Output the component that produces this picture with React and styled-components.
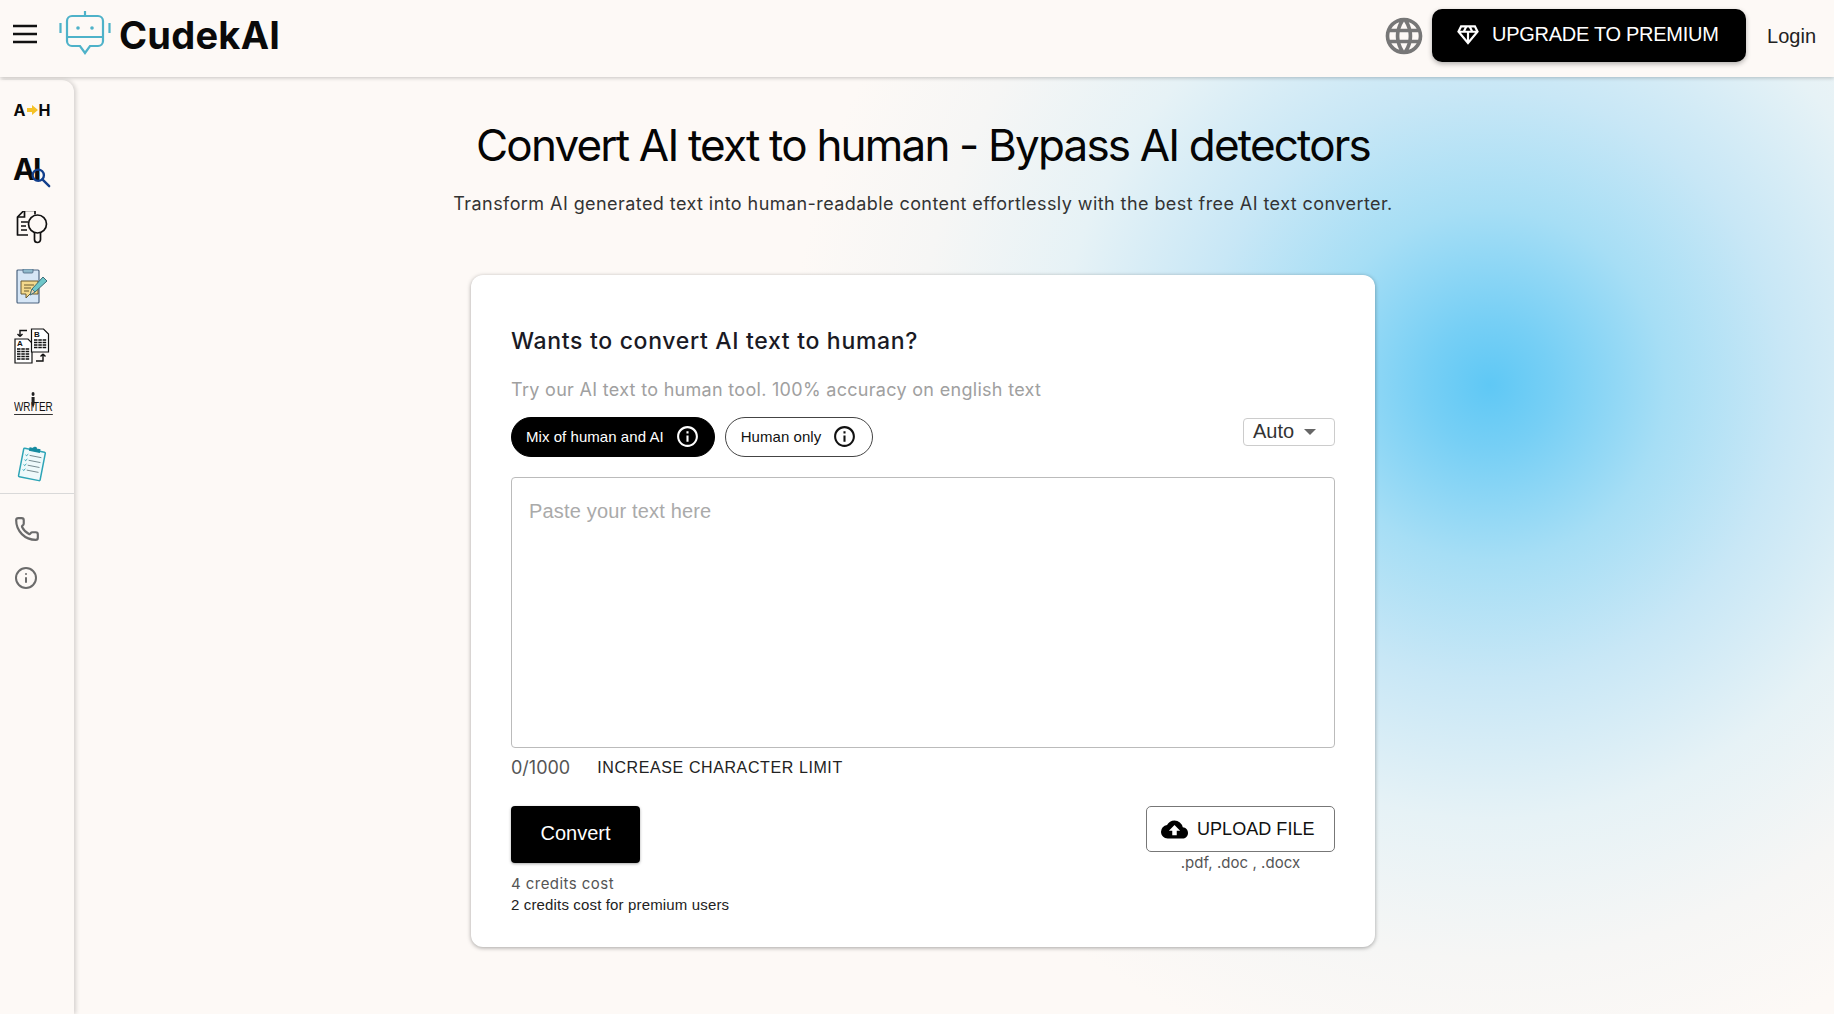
import React from "react";
import styled, { createGlobalStyle } from "styled-components";
import { MdLanguage, MdCloudUpload, MdOutlineDiamond, MdInfoOutline } from "react-icons/md";
import { Phone, Info } from "lucide-react";

const Global = createGlobalStyle`
  * { box-sizing: border-box; }
  html, body { margin: 0; padding: 0; height: 100%; background: #fdf9f6; }
  body { font-family: "Liberation Sans", Arial, sans-serif; color: #000; }
`;

const Page = styled.div`
  width: 1834px;
  height: 1014px;
  overflow: hidden;
  display: flex;
  flex-direction: column;
  background: #fdf9f6;
`;

const Header = styled.header`
  height: 77px;
  flex: none;
  display: flex;
  align-items: center;
  padding: 0 18px 0 12px;
  background: #fdf9f6;
  box-shadow: 0 1px 4px rgba(0, 0, 0, 0.22);
  position: relative;
  z-index: 2;
`;

const Burger = styled.svg`
  width: 26px;
  height: 20px;
  margin-top: -10px;
  flex: none;
`;

const LogoMark = styled.svg`
  width: 52px;
  height: 46px;
  margin-left: 21px;
  margin-top: -11px;
  flex: none;
`;

const Brand = styled.div`
  font-family: Inter, sans-serif;
  font-weight: 700;
  font-size: 38px;
  letter-spacing: 0.25px;
  margin-left: 8px;
  margin-top: -7px;
  color: #0a0a0a;
`;

const Spacer = styled.div`
  flex: 1;
`;

const Globe = styled(MdLanguage)`
  width: 44px;
  height: 44px;
  margin-top: -5px;
  color: #777;
  flex: none;
  margin-right: 6px;
`;

const PremiumButton = styled.button`
  width: 314px;
  height: 53px;
  margin-top: -6px;
  display: flex;
  align-items: center;
  gap: 11px;
  padding: 0 0 2px 23px;
  border: 0;
  border-radius: 10px;
  background: #000;
  color: #fff;
  font: 400 20px "Liberation Sans", sans-serif;
  letter-spacing: -0.28px;
  box-shadow: 0 2px 5px rgba(0, 0, 0, 0.3);
  svg { width: 26px; height: 26px; }
`;

const Login = styled.div`
  margin-left: 21px;
  margin-top: -4px;
  font-size: 20px;
  color: #222;
`;

const Body = styled.div`
  flex: 1;
  display: flex;
  min-height: 0;
  background: radial-gradient(
    circle 700px at 1490px 308px,
    #5fc8f5 0%,
    #76cff5 9%,
    #a6def5 25%,
    #c8e7f6 42%,
    #e6f2f6 62%,
    #f6f6f5 82%,
    #fdf9f6 100%
  );
`;

const Sidebar = styled.nav`
  width: 74px;
  flex: none;
  margin-top: 3px;
  background: #fdf9f6;
  border-top-right-radius: 12px;
  box-shadow: 2px 0 4px rgba(0, 0, 0, 0.16);
  display: flex;
  flex-direction: column;
`;

const NavItem = styled.div`
  height: 59px;
  flex: none;
  display: flex;
  align-items: center;
  justify-content: center;
  padding-right: 10px;
  position: relative;
`;

const NavDivider = styled.div`
  height: 1px;
  background: #d9d9d9;
  margin-bottom: 10px;
`;

const NavLink = styled.div`
  height: 49px;
  flex: none;
  display: flex;
  align-items: center;
  padding-left: 14px;
  color: #6b6b6b;
`;

const ConvertMark = styled.div`
  display: flex;
  align-items: center;
  gap: 1px;
  font: 700 16px Inter, sans-serif;
  color: #0a0a0a;
  svg { width: 11px; height: 10px; }
`;

const DetectMark = styled.div`
  position: relative;
  width: 36px;
  height: 34px;
  margin-left: -2px;
  font: 700 30px/34px Inter, sans-serif;
  letter-spacing: -2.5px;
  color: #0a0a0a;
  svg {
    position: absolute;
    right: -2px;
    bottom: -2px;
    width: 20px;
    height: 20px;
  }
`;

const WriterMark = styled.div`
  position: relative;
  left: 1px;
  font: 400 13px/14px "Liberation Sans", sans-serif;
  transform: scaleX(0.76);
  color: #111;
  border-bottom: 1.5px solid #333;
  padding-top: 5px;
  letter-spacing: -0.1px;
  svg {
    position: absolute;
    left: 50%;
    top: -3px;
    margin-left: -3px;
    width: 6px;
    height: 16px;
  }
`;

const Content = styled.main`
  flex: 1;
  min-width: 0;
  display: flex;
  flex-direction: column;
  align-items: center;
  padding: 42px 62px 0 0;
`;

const Title = styled.h1`
  margin: 0;
  font: 400 44px/52px Inter, sans-serif;
  letter-spacing: -1.82px;
  color: #050505;
  white-space: nowrap;
`;

const Subtitle = styled.p`
  margin: 21px 0 0;
  font: 400 18px/24px Inter, sans-serif;
  letter-spacing: 0.43px;
  color: #333;
  white-space: nowrap;
`;

const Card = styled.section`
  width: 904px;
  height: 672px;
  margin-top: 59px;
  flex: none;
  padding: 40px;
  background: #fff;
  border-radius: 12px;
  box-shadow: 0 1px 4px rgba(0, 0, 0, 0.35);
  display: flex;
  flex-direction: column;
`;

const CardTitle = styled.h2`
  margin: 12px 0 0;
  font: 500 23px/28px Inter, sans-serif;
  letter-spacing: 0.68px;
  color: #1a1a24;
`;

const CardHint = styled.p`
  margin: 23px 0 0;
  font: 400 18px/24px Inter, sans-serif;
  letter-spacing: 0.3px;
  color: #a0a0a0;
`;

const ModeRow = styled.div`
  margin-top: 15px;
  display: flex;
  align-items: flex-start;
  gap: 10px;
  flex: none;
`;

const Pill = styled.button`
  height: 40px;
  padding: ${(p) => (p.$active ? "0 14px 2px 14px" : "0 15px 2px 15px")};
  display: flex;
  align-items: center;
  gap: 11px;
  border-radius: 20px;
  border: 1px solid ${(p) => (p.$active ? "#000" : "#444")};
  background: ${(p) => (p.$active ? "#000" : "#fff")};
  color: ${(p) => (p.$active ? "#fff" : "#111")};
  font: 400 15px "Liberation Sans", sans-serif;
  letter-spacing: 0.05px;
  svg { width: 25px; height: 25px; }
`;

const LangSelect = styled.div`
  margin-left: auto;
  margin-top: 1px;
  width: 92px;
  height: 28px;
  padding: 0 0 2px 9px;
  display: flex;
  align-items: center;
  gap: 10px;
  border: 1px solid #ccc;
  border-radius: 4px;
  font-size: 20px;
  color: #333;
`;

const Caret = styled.span`
  width: 0;
  height: 0;
  margin-top: 2px;
  border-left: 6.5px solid transparent;
  border-right: 6.5px solid transparent;
  border-top: 6.5px solid #666;
`;

const TextArea = styled.textarea`
  display: block;
  flex: none;
  width: 100%;
  height: 271px;
  margin-top: 20px;
  padding: 21px 17px;
  border: 1px solid #bbb;
  border-radius: 4px;
  resize: none;
  outline: none;
  font: 400 20px/24px "Liberation Sans", sans-serif;
  letter-spacing: 0.17px;
  &::placeholder { color: #aaa; opacity: 1; }
`;

const CounterRow = styled.div`
  margin-top: 9px;
  display: flex;
  align-items: center;
  gap: 27px;
  height: 21px;
  flex: none;
`;

const Counter = styled.span`
  font: 400 18px Inter, sans-serif;
  letter-spacing: 0px;
  color: #555;
`;

const LimitLink = styled.span`
  font-size: 16px;
  letter-spacing: 0.6px;
  color: #222;
`;

const ActionRow = styled.div`
  margin-top: 28px;
  display: flex;
  justify-content: space-between;
  align-items: flex-start;
`;

const ConvertColumn = styled.div`
  display: flex;
  flex-direction: column;
`;

const ConvertButton = styled.button`
  width: 129px;
  height: 57px;
  border: 0;
  padding: 0 0 2px;
  border-radius: 4px;
  background: #000;
  color: #fff;
  font: 400 20px "Liberation Sans", sans-serif;
  box-shadow: 0 1px 3px rgba(0, 0, 0, 0.35);
`;

const CostNote = styled.div`
  margin-top: 10px;
  font: 400 15px/21px Inter, sans-serif;
  letter-spacing: 0.45px;
  color: #555;
`;

const PremiumNote = styled.div`
  font-size: 15px;
  line-height: 21px;
  letter-spacing: 0.15px;
  color: #222;
`;

const UploadColumn = styled.div`
  display: flex;
  flex-direction: column;
  align-items: center;
`;

const UploadButton = styled.button`
  width: 189px;
  height: 46px;
  display: flex;
  align-items: center;
  gap: 9px;
  padding: 0 0 0 14px;
  background: #fff;
  border: 1px solid #777;
  border-radius: 5px;
  font: 400 18px "Liberation Sans", sans-serif;
  letter-spacing: 0.05px;
  color: #111;
  svg { width: 27px; height: 27px; color: #000; }
`;

const FileTypes = styled.div`
  margin-top: 2px;
  font: 400 15px/18px Inter, sans-serif;
  letter-spacing: 0.05px;
  color: #555;
`;

function AbDocsIcon() {
  return (
    <svg width="36" height="36" viewBox="0 0 36 36" fill="none" stroke="#111" strokeWidth="1.2">
      <path d="M1 11h13l4 4v20H1z" fill="#fff" />
      <path d="M17.5 1h12l5 5v18h-17z" fill="#fff" />
      <text x="3" y="18" fontFamily="Liberation Sans" fontSize="8" fontWeight="700" fill="#111" stroke="none">A</text>
      <text x="20" y="9" fontFamily="Liberation Sans" fontSize="8" fontWeight="700" fill="#111" stroke="none">B</text>
      <path d="M3 21h13M3 23.5h13M3 26h13M3 28.5h13M3 31h13M20 12h13M20 14.5h13M20 17h13M20 19.5h13" strokeDasharray="3.5 .8" strokeWidth="1.3" />
      <path d="M13 2.5H6v6M6 8.5 3.5 6M6 8.5 8.5 6M22 33h7v-7M29 26l-2.5 2.5M29 26l2.5 2.5" strokeWidth="1.4" />
    </svg>
  );
}

function App() {
  return (
    <>
      <Global />
      <Page>
        <Header>
          <Burger viewBox="0 0 26 20" aria-label="Menu">
            <path d="M1 2h24M1 10h24M1 18h24" stroke="#111" strokeWidth="2.6" />
          </Burger>
          <LogoMark viewBox="0 0 52 46" fill="none" stroke="#4eb2c9" strokeWidth="2.2">
            <path d="M26 1v5" />
            <path d="M13 6h26a5 5 0 0 1 5 5v20a5 5 0 0 1-5 5h-8l-5 7-5-7h-8a5 5 0 0 1-5-5V11a5 5 0 0 1 5-5z" />
            <path d="M8 27h36" />
            <path d="M1.5 13v10M50.5 13v10" />
            <circle cx="19" cy="18" r="1.8" fill="#4eb2c9" stroke="none" />
            <circle cx="33" cy="18" r="1.8" fill="#4eb2c9" stroke="none" />
          </LogoMark>
          <Brand>CudekAI</Brand>
          <Spacer />
          <Globe />
          <PremiumButton>
            <MdOutlineDiamond />
            UPGRADE TO PREMIUM
          </PremiumButton>
          <Login>Login</Login>
        </Header>
        <Body>
          <Sidebar>
            <NavItem>
              <ConvertMark>
                A
                <svg viewBox="0 0 11 10"><path d="M0 3h5V0l6 5-6 5V7H0z" fill="#f5c227" /></svg>
                H
              </ConvertMark>
            </NavItem>
            <NavItem>
              <DetectMark>
                AI
                <svg viewBox="0 0 22 22" fill="none" stroke="#123f8c" strokeWidth="2.6">
                  <circle cx="8" cy="8" r="6.2" />
                  <path d="M12.5 12.5 20 20" strokeLinecap="round" />
                </svg>
              </DetectMark>
            </NavItem>
            <NavItem>
              <svg width="32" height="34" viewBox="0 2 32 34" fill="none" stroke="#111" strokeWidth="1.7">
                <path d="M12 26H1.5V8L8 1.5h11v4" strokeLinejoin="round" />
                <path d="M2 8h6.5V2" />
                <path d="M5 13h7M5 17h5M5 21h6" />
                <circle cx="21.5" cy="15" r="9" />
                <path d="M18.5 24v6.5a2.8 2.8 0 0 0 6 0V24" />
              </svg>
            </NavItem>
            <NavItem>
              <svg width="32" height="36" viewBox="0 1 32 36" fill="none">
                <rect x="1" y="2" width="22" height="33" rx="1" fill="#d6e6f6" stroke="#4c6480" strokeWidth="1.2" />
                <path d="M7 1h10v3a1 1 0 0 1-1 1H8a1 1 0 0 1-1-1z" fill="#8fb9cc" stroke="#4c6480" strokeWidth=".8" />
                <path d="M5 13h17v13H14l-4 4v-4H5z" fill="#f4d98c" stroke="#6b5a30" strokeWidth="1" />
                <path d="M8 17h10M8 20h7M8 23h5" stroke="#6b5a30" strokeWidth="1" />
                <path d="M14 27l2-6L27 9l4 4-12 11z" fill="#6fc7c9" stroke="#3d6d78" strokeWidth="1" />
                <path d="M14 27l2-6 3 3z" fill="#e9d2b0" stroke="#3d6d78" strokeWidth=".8" />
              </svg>
            </NavItem>
            <NavItem>
              <AbDocsIcon />
            </NavItem>
            <NavItem>
              <WriterMark>
                WRITER
                <svg viewBox="0 0 6 16"><circle cx="3" cy="2" r="2" fill="#222" /><path d="M1 5h4v7l-2 4-2-4z" fill="#222" /></svg>
              </WriterMark>
            </NavItem>
            <NavItem>
              <svg width="30" height="38" viewBox="0 0 30 38" fill="none" stroke="#2da4b6" strokeWidth="1.2">
                <g transform="rotate(11 15 19)">
                  <rect x="4" y="5" width="22" height="29" rx="1" fill="#eef9fb" strokeWidth="1.5" />
                  <path d="M10 6V3.5h3.5a1.5 1.5 0 0 1 3 0H20V6z" fill="#178ba0" stroke="#178ba0" />
                  <path d="M11 11h12M11 16h12M11 21h12M11 26h12" stroke="#74878c" strokeWidth=".9" />
                  <path d="M7 11l1 1 1.5-2M7 16l1 1 1.5-2M7 21l1 1 1.5-2M7 26l1 1 1.5-2" strokeWidth=".9" />
                </g>
              </svg>
            </NavItem>
            <NavDivider />
            <NavLink><Phone size={26} strokeWidth={2} /></NavLink>
            <NavLink><Info size={24} strokeWidth={2} /></NavLink>
          </Sidebar>
          <Content>
            <Title>Convert AI text to human - Bypass AI detectors</Title>
            <Subtitle>Transform AI generated text into human-readable content effortlessly with the best free AI text converter.</Subtitle>
            <Card>
              <CardTitle>Wants to convert AI text to human?</CardTitle>
              <CardHint>Try our AI text to human tool. 100% accuracy on english text</CardHint>
              <ModeRow>
                <Pill $active>Mix of human and AI <MdInfoOutline /></Pill>
                <Pill>Human only <MdInfoOutline /></Pill>
                <LangSelect>Auto <Caret /></LangSelect>
              </ModeRow>
              <TextArea placeholder="Paste your text here" />
              <CounterRow>
                <Counter>0/1000</Counter>
                <LimitLink>INCREASE CHARACTER LIMIT</LimitLink>
              </CounterRow>
              <ActionRow>
                <ConvertColumn>
                  <ConvertButton>Convert</ConvertButton>
                  <CostNote>4 credits cost</CostNote>
                  <PremiumNote>2 credits cost for premium users</PremiumNote>
                </ConvertColumn>
                <UploadColumn>
                  <UploadButton><MdCloudUpload /> UPLOAD FILE</UploadButton>
                  <FileTypes>.pdf, .doc , .docx</FileTypes>
                </UploadColumn>
              </ActionRow>
            </Card>
          </Content>
        </Body>
      </Page>
    </>
  );
}

export default App;
